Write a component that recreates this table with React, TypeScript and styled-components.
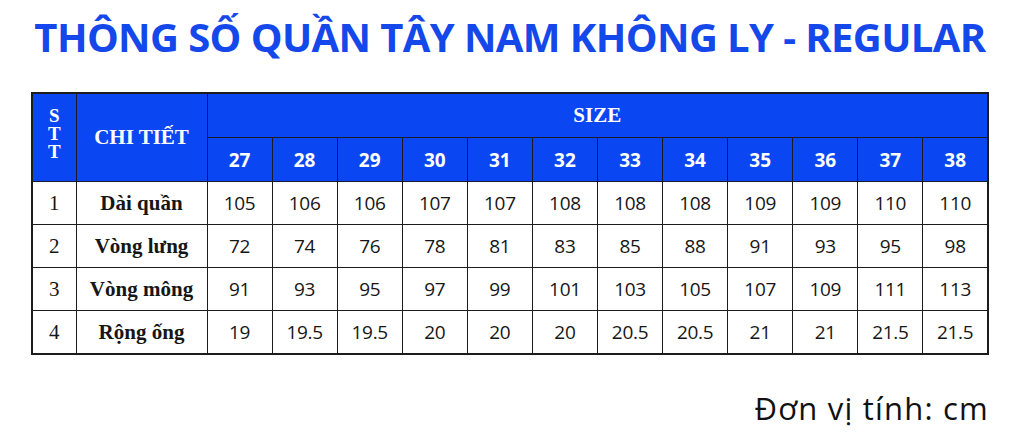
import React from "react";
import styled, { createGlobalStyle } from "styled-components";

const GlobalStyle = createGlobalStyle`
  html, body {
    margin: 0;
    padding: 0;
    background: #ffffff;
  }
`;

const Page = styled.div`
  width: 1009px;
  height: 438px;
  box-sizing: border-box;
  padding: 14px 20px 0 31px;
  display: flex;
  flex-direction: column;
`;

const Title = styled.h1`
  margin: 0;
  text-align: center;
  font-family: "Open Sans", sans-serif;
  font-weight: 700;
  font-size: 40px;
  line-height: 46px;
  letter-spacing: -0.6px;
  color: #1448ea;
  white-space: nowrap;
`;

const Table = styled.table`
  margin-top: 32px;
  width: 958px;
  border-collapse: collapse;
  table-layout: fixed;
  border: 2px solid #1c1c1c;
`;

const HeadCell = styled.th<{ serif?: boolean }>`
  background: #0b46f3;
  color: #ffffff;
  border: 1.5px solid #1a1a2a;
  padding: 0;
  height: 43px;
  font-family: ${(p) =>
    p.serif ? '"Liberation Serif", serif' : '"Open Sans", sans-serif'};
  font-weight: 700;
  font-size: ${(p) => (p.serif ? "21px" : "19px")};
  text-align: center;
  vertical-align: middle;
`;

const SttHead = styled(HeadCell)`
  padding-bottom: 8px;
`;

const SttLetter = styled.span`
  display: block;
  font-size: 19px;
  line-height: 18px;
`;

const Cell = styled.td<{ kind?: "stt" | "label" }>`
  border: 1.5px solid #1c1c1c;
  height: 42px;
  padding: 0;
  text-align: center;
  vertical-align: middle;
  color: #161616;
  font-family: ${(p) =>
    p.kind ? '"Liberation Serif", serif' : '"Open Sans", sans-serif'};
  font-weight: ${(p) => (p.kind === "label" ? 700 : 400)};
  font-size: ${(p) => (p.kind ? "21px" : "19px")};
  letter-spacing: ${(p) => (p.kind ? "0" : "-0.3px")};
`;

const Unit = styled.div`
  margin-top: 33px;
  text-align: right;
  font-family: "Open Sans", sans-serif;
  font-size: 31px;
  line-height: 40px;
  color: #111111;
  letter-spacing: 1.2px;
`;

const sizes = [27, 28, 29, 30, 31, 32, 33, 34, 35, 36, 37, 38];

const rows = [
  {
    label: "Dài quần",
    values: ["105", "106", "106", "107", "107", "108", "108", "108", "109", "109", "110", "110"],
  },
  {
    label: "Vòng lưng",
    values: ["72", "74", "76", "78", "81", "83", "85", "88", "91", "93", "95", "98"],
  },
  {
    label: "Vòng mông",
    values: ["91", "93", "95", "97", "99", "101", "103", "105", "107", "109", "111", "113"],
  },
  {
    label: "Rộng ống",
    values: ["19", "19.5", "19.5", "20", "20", "20", "20.5", "20.5", "21", "21", "21.5", "21.5"],
  },
];

export default function App() {
  return (
    <Page>
      <GlobalStyle />
      <Title>THÔNG SỐ QUẦN TÂY NAM KHÔNG LY - REGULAR</Title>
      <Table>
        <colgroup>
          <col style={{ width: 44 }} />
          <col style={{ width: 131 }} />
          {sizes.map((s) => (
            <col key={s} />
          ))}
        </colgroup>
        <thead>
          <tr>
            <SttHead serif rowSpan={2}>
              <SttLetter>S</SttLetter>
              <SttLetter>T</SttLetter>
              <SttLetter>T</SttLetter>
            </SttHead>
            <HeadCell serif rowSpan={2}>
              CHI TIẾT
            </HeadCell>
            <HeadCell serif colSpan={12}>
              SIZE
            </HeadCell>
          </tr>
          <tr>
            {sizes.map((s) => (
              <HeadCell key={s}>{s}</HeadCell>
            ))}
          </tr>
        </thead>
        <tbody>
          {rows.map((r, i) => (
            <tr key={r.label}>
              <Cell kind="stt">{i + 1}</Cell>
              <Cell kind="label">{r.label}</Cell>
              {r.values.map((v, j) => (
                <Cell key={j}>{v}</Cell>
              ))}
            </tr>
          ))}
        </tbody>
      </Table>
      <Unit>Đơn vị tính: cm</Unit>
    </Page>
  );
}
